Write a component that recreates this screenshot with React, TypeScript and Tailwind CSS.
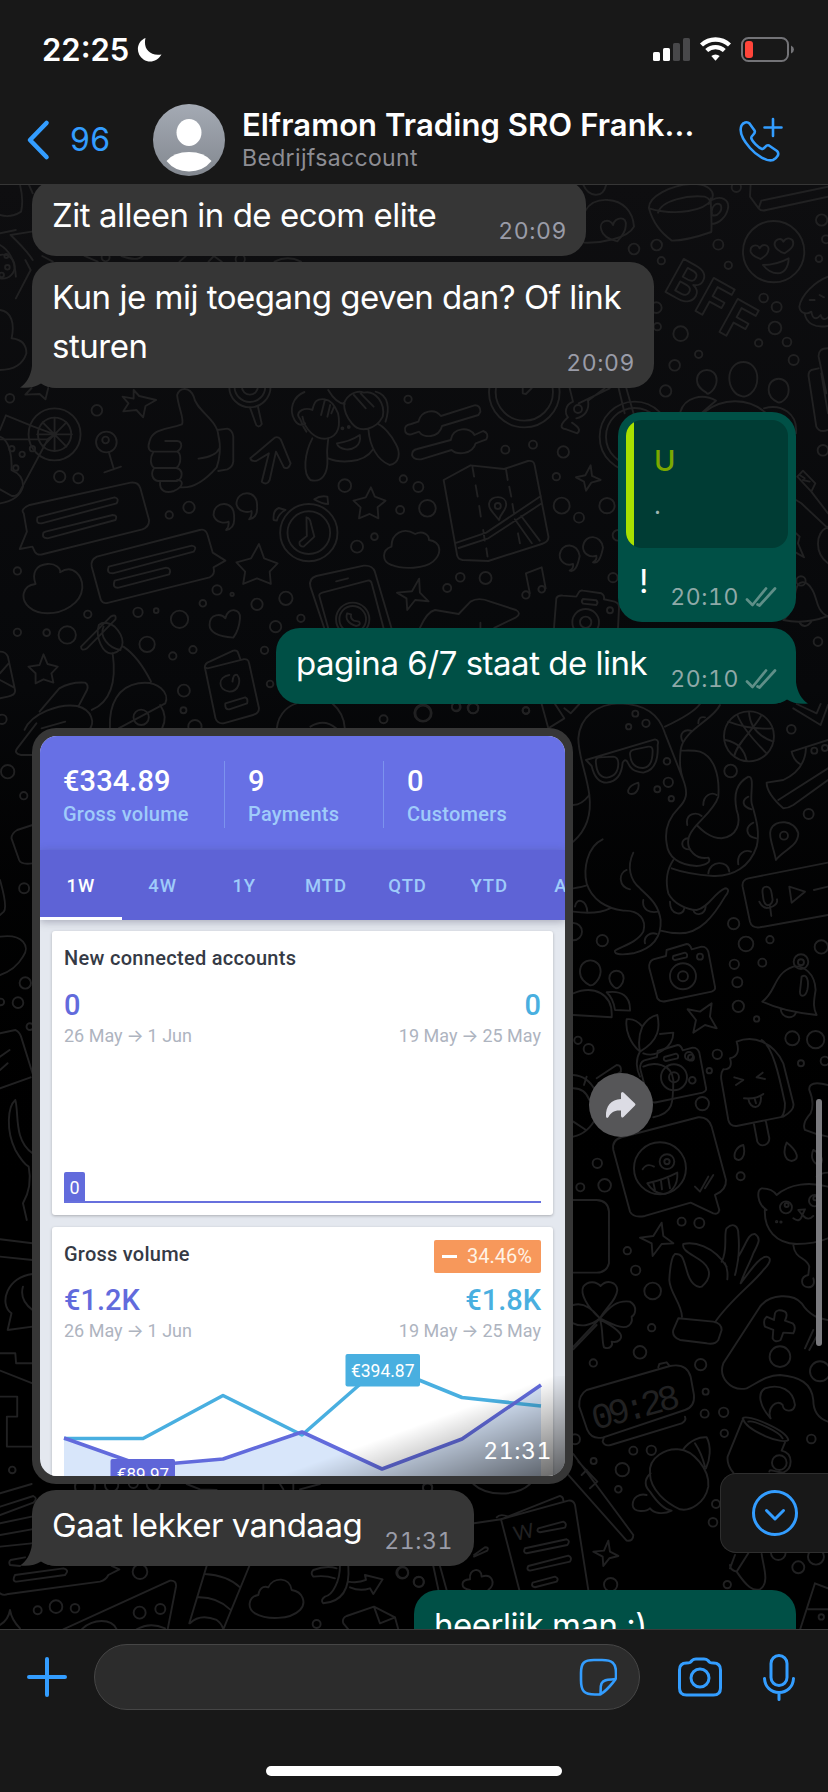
import clsx from 'clsx'
import React, { FC, ReactNode } from 'react'

/* ---------- Wallpaper ---------- */

type Dot = [number, number, number]

interface IDoodles {
  id: string
  transform: string
  // keeps the dots round where a group is scaled unevenly
  squeeze: number
  paths: string[]
  dots: Dot[]
}

const doodles: IDoodles[] = [
  {
    id: 'top-right',
    transform: 'translate(548 180) scale(0.3333)',
    squeeze: 1,
    paths: [
      'M112 92C125 70 150 58 180 60C225 62 255 95 258 140C240 175 160 190 108 188M105 12C120 50 165 60 175 12',
      'M160 150C150 125 185 110 195 135C200 110 240 105 233 140C232 160 215 175 208 184C190 180 165 170 160 150Z',
      'M303 85C300 50 370 15 430 12C480 10 505 35 490 60C470 90 390 110 303 85ZM330 98C340 60 420 45 470 50C485 55 490 65 482 72M303 85C315 130 340 160 372 182C410 182 450 170 490 156C492 140 490 110 488 55M492 60C520 45 545 60 540 85C535 110 515 130 492 132M492 100C488 80 505 65 518 75C525 90 510 112 492 105',
      'M608 12L606 50L632 85Q640 95 655 90L840 50M632 85L640 62L840 20',
      'M608 215C605 195 630 190 635 205C645 188 668 195 660 215C656 228 645 232 638 237C625 232 612 228 608 215ZM680 195C678 178 700 170 706 185C715 170 740 172 735 195C732 208 715 215 710 220C695 215 683 208 680 195ZM645 255Q685 255 722 235C722 265 705 280 690 280C670 280 655 268 645 255Z',
      'M840 290C800 305 760 345 754 380C756 400 775 405 790 395C795 425 810 415 818 405C822 420 832 420 840 412M770 400C775 430 800 445 840 438M785 360H800M815 345L828 352',
      'M447 600C447 560 506 560 506 600C506 625 480 650 475 638C462 630 447 620 447 600ZM544 595C544 530 628 530 628 595C628 640 590 655 580 648C560 645 544 620 544 595ZM662 630C662 585 722 585 722 630C722 655 700 670 690 667C675 660 662 650 662 630ZM397 696C410 650 465 640 504 662Q470 690 460 700M470 696C520 655 600 650 655 700M648 685C700 670 750 700 744 760',
      'M212 625L230 700M235 625L258 705M65 625L75 665C50 675 50 700 60 712C35 735 35 745 55 748L88 760C100 750 90 740 72 728M120 662L170 625M120 662C125 690 110 710 85 715M92 670L185 625',
      'M128 856L132 888L158 900L130 908L114 932L108 905L84 892L112 886Z',
      'M95 1128C90 1088 40 1085 35 1125C35 1145 55 1160 75 1152Q78 1165 65 1172Q85 1180 95 1128ZM165 1103C160 1063 110 1060 105 1100C105 1120 125 1135 145 1127Q148 1140 135 1147Q155 1155 165 1103Z',
      'M18 1344L25 1255Q30 1245 45 1247L85 1250L92 1238Q95 1230 105 1232L160 1240Q170 1245 168 1258L200 1265Q215 1270 213 1285L210 1344M105 1257L145 1261Q152 1268 145 1275L105 1271Q98 1264 105 1257Z',
      'M748 890L765 872L802 910L790 935M748 890L790 935L840 1000M755 885L770 895M765 900L785 905M744 960L760 970L840 1045M840 1040C800 1060 800 1120 840 1150M744 1060L755 1070L750 1090L768 1132L744 1118',
      'M706 1320C730 1300 735 1270 744 1230C750 1200 775 1200 790 1225C810 1250 800 1290 840 1310M706 1320Q770 1335 840 1308M755 1328Q770 1350 790 1325',
      'M840 505Q810 505 812 530L835 640M812 565L790 570Q780 575 782 590L805 740Q815 760 840 750M820 580L840 700',
    ],
    dots: [[677, 215, 92], [260, 770, 105], [260, 770, 86], [90, 687, 12], [113, 1327, 40], [113, 1327, 17], [186, 1291, 9], [759, 1203, 14], [258, 207, 16], [326, 195, 16], [340, 242, 11], [511, 194, 15], [541, 256, 11], [565, 22, 14], [821, 120, 17], [813, 236, 10], [834, 178, 12], [647, 354, 13], [686, 381, 15], [681, 444, 19], [717, 486, 13], [632, 489, 11], [737, 540, 15], [452, 523, 11], [380, 556, 16], [398, 461, 22], [353, 633, 17], [325, 383, 16], [328, 440, 11], [46, 816, 17], [25, 890, 11], [41, 977, 24], [93, 1013, 15], [177, 977, 23], [195, 1193, 14], [210, 1066, 16], [825, 811, 16], [810, 1385, 13]],
  },
  {
    id: 'upper-left',
    transform: 'translate(0 380) scale(0.3954 0.3333)',
    squeeze: 0.843,
    paths: [
      'M80 24L64 44L100 42L115 58L122 24M338 30L352 48L395 60L368 78L362 112L345 90L312 94L325 70L310 50L338 56Z',
      'M0 150L15 106L85 140L138 163L120 178H0M120 180L50 335Q42 350 30 348L0 328M138 113V213M94 163H182M108 127L168 200M168 127L108 200',
      'M275 216L288 268M264 277L306 260',
      'M460 133C468 120 450 80 448 45C455 20 480 20 490 50C495 90 550 120 552 165C560 200 555 240 548 262C520 300 490 325 458 322M460 133C420 150 385 145 378 185C372 205 378 215 388 215H448C462 205 462 185 448 183H418M388 215C378 235 380 255 390 264H446C460 250 458 220 448 215M390 264C380 280 385 300 400 303H448C462 295 465 270 446 264M405 303C402 335 420 340 440 333C465 320 465 300 448 300M502 236Q545 230 555 205M550 150L575 146Q588 150 590 170V245Q588 262 575 268L552 273',
      'M632 82L648 135Q655 145 662 132L652 78',
      'M633 235L690 178Q700 165 710 178L735 250Q730 270 718 262L698 215L682 300Q675 318 662 305L680 220L648 243Q635 245 633 235Z',
      'M770 36C740 50 730 90 745 120C755 140 768 135 772 130M765 110C770 150 800 180 825 176C860 170 860 130 855 100C845 70 835 60 822 58C800 55 795 65 790 90C770 80 750 95 755 110C765 125 760 130 775 155M822 58L812 105M835 75L828 110M845 80L838 100M870 70C880 40 905 30 920 38C950 30 975 70 968 110C950 150 910 160 890 130C875 110 870 90 870 70ZM895 45L925 85M912 40L945 80M950 35C985 45 985 90 975 125M790 175C770 220 765 280 785 300C815 310 830 280 828 235C825 205 830 190 830 176M932 150C935 200 955 240 985 255C1010 250 1015 220 1000 190C990 165 970 140 958 133M830 235C860 250 920 250 942 210M830 30Q850 70 872 72M852 190Q885 185 910 165C915 200 890 210 875 208Q855 205 852 190Z',
      'M1025 155Q1020 135 1040 132L1058 125C1065 90 1100 85 1115 108L1200 76Q1215 75 1215 95L1210 105L1118 138C1110 175 1070 175 1060 155L1040 163Q1030 165 1025 155ZM1042 225Q1042 210 1055 207L1140 180C1145 140 1190 140 1200 165L1222 153Q1238 160 1230 178L1203 190C1195 225 1155 225 1142 210L1065 238Q1045 240 1042 225Z',
      'M1322 24V40L1330 42L1345 24',
      'M60 400Q50 388 75 375L330 308Q350 305 355 325L377 420Q378 440 360 448L110 522Q95 528 88 515L82 500L50 507L68 455ZM100 410L290 352Q302 355 295 370L105 430Q90 432 95 412ZM115 455L285 405Q298 405 292 420L120 475Q105 475 110 458Z',
      'M232 560Q228 540 245 530L505 450Q520 445 525 465L538 518L570 542L540 562Q545 585 530 592L275 668Q260 673 255 660ZM275 560L485 497Q500 500 490 515L285 580Q268 580 275 560ZM290 602L420 563Q435 565 428 583L300 623Q283 625 290 602Z',
      'M592 410C595 360 540 360 540 405C545 430 570 430 578 425Q580 440 572 450Q595 445 592 410ZM650 378C653 328 598 328 598 373C603 398 628 398 636 393Q638 408 630 418Q653 413 650 378Z',
      'M775 412Q785 415 786 430L795 470L768 500Q755 500 758 485L776 468ZM795 358Q810 345 828 350L830 372Q815 372 795 358ZM692 420Q690 390 705 384L722 390Q705 400 700 422Z',
      'M938 322L948 350L975 362L955 382L957 415L935 402L908 415L912 382L894 362L925 352ZM655 492L668 535L702 550L682 575L685 612L650 595L615 612L620 575L598 547L635 535ZM110 823L120 852L146 860L130 880L135 908L110 898L90 910L90 880L72 860L100 855Z',
      'M990 555C965 545 965 510 990 500C990 460 1020 440 1050 462C1070 450 1085 465 1085 480C1115 485 1120 520 1095 545C1075 565 1020 570 990 555ZM90 612C80 580 90 555 120 552C140 550 155 565 152 577C185 550 210 590 208 625C205 670 160 700 120 700C80 700 55 670 60 640Q65 615 90 612Z',
      'M1122 300L1190 256L1275 267L1335 243Q1350 240 1352 255L1387 470Q1388 485 1370 492L1235 543L1170 540Q1158 538 1156 525ZM1155 488L1230 458L1368 348M1160 504L1235 475L1370 370M1302 418L1345 490M1318 408L1365 482M1262 420C1245 395 1235 385 1237 370C1240 345 1280 345 1280 372C1282 390 1265 400 1262 420ZM1195 262L1199 290M1203 316L1208 350M1212 378L1216 410M1222 450L1226 482M1230 505L1233 530M1280 270L1284 300M1288 320L1293 350M1296 372L1300 400M1310 460L1315 490',
      'M820 744L785 620Q780 595 800 588L920 557Q942 555 948 575L990 744M830 744L808 650Q805 642 815 638L930 602Q938 600 940 610L970 744M850 604L880 595M878 700Q870 725 900 738Q915 735 908 725L895 722Q885 715 888 703Z',
      'M1060 596L1062 638L1084 664L1050 660L1030 690L1028 655L1004 638L1042 634ZM1340 640L1330 580L1370 562L1380 625',
      'M1062 744Q1080 695 1100 690L1160 702L1190 665Q1210 650 1240 665L1305 690Q1320 700 1305 712L1250 744M1215 728V744',
      'M530 735C530 700 560 700 570 715C575 680 610 685 607 715C605 745 595 765 590 773C560 770 530 760 530 735Z',
      'M205 800L280 710Q295 700 292 718L220 805Q205 815 205 800ZM250 735C240 770 260 825 285 820C320 810 315 770 290 740Q265 720 250 735ZM262 740C250 770 275 805 305 810M285 820C292 880 290 960 232 990M312 800Q350 830 382 905M62 1050C80 1000 150 970 195 978C235 990 240 1030 225 1050M100 995L150 925Q180 905 215 908Q225 915 220 930L198 980M278 1045C275 970 300 920 350 910C400 900 430 940 418 970L300 1045M405 975Q425 1010 410 1045M105 1045L165 1025',
      'M518 862L545 1015Q550 1032 565 1030L640 1005Q655 1000 655 985L630 850Q628 835 615 838L525 865L518 862Q518 850 530 845L590 812Q600 810 602 818L608 838M570 970L620 952Q628 955 625 970L580 988Q568 990 570 970ZM580 885C550 890 550 930 580 935C605 935 610 900 600 885Q590 880 588 905',
      'M0 815Q15 815 20 830L38 930Q40 945 20 950L0 955M0 880L22 850M0 900L35 922M700 1045C705 995 735 975 750 970M840 970Q870 1000 872 1045M785 1040Q820 1015 850 1045',
    ],
    dots: [[138, 163, 78], [138, 163, 50], [269, 186, 31], [267, 180, 10], [632, 20, 62], [632, 20, 46], [632, 20, 24], [1326, 36, 106], [1326, 36, 86], [781, 458, 86], [781, 458, 64], [1259, 378, 9], [892, 718, 50], [892, 718, 40], [1330, 645, 11], [1370, 628, 10], [357, 1012, 23], [866, 145, 3], [882, 141, 3], [25, 55, 13], [245, 91, 16], [151, 290, 17], [198, 295, 15], [30, 206, 8], [56, 223, 8], [82, 206, 8], [40, 264, 8], [428, 405, 11], [478, 382, 17], [872, 317, 19], [1020, 297, 11], [1058, 321, 15], [1012, 390, 12], [1081, 385, 25], [903, 500, 18], [947, 470, 10], [1032, 58, 11], [1278, 209, 12], [1348, 194, 12], [44, 573, 11], [222, 703, 11], [44, 757, 11], [118, 758, 10], [170, 765, 26], [349, 697, 14], [395, 692, 7], [454, 718, 26], [549, 630, 14], [587, 643, 5], [513, 670, 10], [650, 673, 17], [723, 655, 20], [697, 740, 17], [761, 715, 11], [372, 793, 23], [437, 828, 11], [488, 809, 11], [465, 932, 18], [464, 991, 9], [669, 811, 11], [683, 912, 10], [1131, 624, 12], [1164, 592, 13], [1228, 594, 18], [970, 1018, 12], [1070, 1000, 23], [1153, 980, 12], [1197, 985, 15], [1330, 991, 10], [493, 1040, 20], [5, 1018, 14]],
  },
  {
    id: 'middle-right',
    transform: 'translate(400 680) scale(0.3333)',
    squeeze: 1,
    paths: [
      'M568 345C560 280 535 230 535 175C540 110 590 72 660 70C740 72 780 110 795 160L850 300C865 340 860 360 835 385C800 420 795 460 800 490C805 540 850 555 890 558C920 556 935 545 925 533C890 540 860 510 865 480C868 440 940 400 955 350C960 280 940 230 900 215C880 210 860 212 845 212M960 75C940 120 850 150 842 210C838 250 840 270 850 300M795 140Q880 100 900 72',
      'M1045 290C1010 310 1000 340 1010 390C1025 430 1010 470 965 475C930 475 905 450 890 435M1045 290C1065 290 1050 340 1055 370C1070 420 1080 460 1070 500C1050 560 1000 590 940 588C900 585 850 578 815 565M820 540C800 570 795 600 805 640C820 670 860 690 890 690C930 680 940 640 975 625C990 625 985 640 975 650C940 710 900 760 840 760Q810 760 782 752',
      'M608 478C560 500 550 570 560 610C575 660 620 685 670 692C720 690 740 720 730 755C710 790 660 800 645 812C640 825 670 825 700 820C760 805 785 770 782 720C775 670 745 650 720 625C690 600 680 560 700 518M568 345C575 400 560 450 520 485M520 375Q545 375 568 345M520 625Q550 620 558 617M520 695Q590 705 630 685',
      'M680 570C655 580 655 620 690 628M730 660C725 690 750 700 775 695M735 790C730 770 750 755 770 762M810 665C810 705 850 710 853 685M880 690C885 710 915 705 917 680M925 580C930 540 985 540 988 575M1015 553C1010 520 1035 508 1053 515M1060 428C1035 440 1035 470 1070 475M1045 350C1025 360 1025 380 1055 388M910 375C910 345 935 335 950 345M862 435C855 400 890 395 905 408M865 475C840 475 840 510 870 508M848 185C835 160 855 145 875 153M895 130Q895 108 915 112M525 680C530 650 560 660 562 695',
      'M558 240L765 178Q778 180 773 195C775 230 770 270 730 278C700 275 690 265 682 245Q675 235 668 248C665 285 650 305 620 308C590 308 580 280 575 258ZM588 250Q585 232 600 232L640 230Q655 232 655 250C655 275 645 290 620 293C600 292 590 275 588 250ZM690 222Q690 210 705 208L745 200Q758 198 758 212C758 240 750 262 730 264C705 265 692 250 690 222ZM685 330Q690 315 715 308C720 330 705 342 695 342Q682 342 685 330Z',
      'M1012 105C1030 150 1080 200 1100 220M1085 105C1060 150 1010 190 1003 228M976 180Q1030 190 1040 243M985 125Q1050 150 1118 145M1047 95Q1050 160 1120 185',
      'M1180 85L1262 135L1284 75M1190 72L1250 100L1262 72M1175 215L1284 180M1175 215Q1180 240 1200 252M1218 205Q1215 270 1150 300L1100 308Q1100 340 1150 385Q1165 385 1180 375L1284 300M1135 360L1284 265',
      'M1128 540C1120 500 1105 470 1112 450C1125 415 1185 420 1195 460C1195 500 1150 510 1128 540Z',
      'M1284 548L1045 595Q1025 600 1028 620L1050 725Q1055 745 1080 742L1284 705M1168 620L1215 635L1175 668ZM1242 630L1284 620M1110 678L1114 708M1078 665Q1090 690 1110 682Q1135 675 1131 658M1088 640Q1085 620 1100 620Q1113 622 1115 640L1118 660Q1115 675 1103 676Q1092 672 1090 655Z',
      'M540 875C540 830 602 830 602 875C600 900 580 918 570 916C555 910 540 895 540 875ZM628 895C628 865 671 865 671 895C670 915 655 925 648 925C640 920 630 912 628 895ZM520 940C580 915 640 940 635 1012L520 1005M620 937C665 930 692 950 690 992L645 990Q640 955 620 937Z',
      'M863 988L900 995L935 970L930 1010L950 1045L915 1035L880 1058L888 1020Z',
      'M1180 860C1210 855 1245 880 1247 930C1240 970 1240 985 1250 1005C1200 1000 1140 990 1087 965C1130 935 1120 880 1180 860ZM1142 987C1145 1015 1180 1020 1188 998M1205 890C1220 880 1228 900 1222 930C1215 955 1200 950 1200 935Z',
      'M720 1115C690 1090 675 1050 680 1018C700 1015 715 1025 727 1040C740 1020 755 1008 772 1005C780 1040 780 1080 720 1115ZM727 1040Q712 1075 720 1115M780 1062L820 1058C820 1100 770 1135 730 1120M720 1115C705 1140 710 1170 720 1190M730 1160C760 1145 815 1150 820 1200C820 1270 820 1300 760 1312',
      'M520 1185C580 1190 610 1260 590 1310C570 1350 545 1365 520 1370M520 1225Q555 1225 568 1260M590 1195L650 1155Q665 1155 663 1175L625 1200M520 1325L558 1350M560 1190L552 1215',
      'M1010 1085C1060 1065 1120 1085 1150 1150L1180 1270Q1185 1290 1150 1310L1010 1338Q990 1340 985 1320L965 1205Q960 1180 970 1168C995 1170 995 1150 990 1135C1015 1130 1018 1110 1010 1085ZM1085 1080C1120 1100 1140 1200 1155 1270Q1155 1300 1145 1310M1062 1332L1072 1385Q1080 1400 1095 1395Q1108 1390 1108 1375L1098 1325M1003 1192L1030 1200L1008 1215M1088 1178L1070 1192L1095 1197M1032 1255Q1070 1258 1090 1242M1045 1256C1050 1290 1085 1290 1083 1252M1064 1256L1068 1270',
      'M935 1340L978 1500Q980 1530 945 1545L958 1590Q955 1605 940 1600L872 1568L735 1608Q700 1615 690 1595L640 1410Q635 1380 665 1372L895 1312Q925 1310 935 1340ZM728 1468Q740 1448 762 1460M742 1510Q790 1500 832 1478C835 1520 810 1540 790 1542Q760 1540 742 1510ZM760 1508L765 1530M783 1502L786 1528M805 1496L810 1525M885 1520L900 1535L925 1490M915 1525L940 1485',
      'M1284 1215Q1225 1200 1228 1230Q1245 1270 1232 1300Q1205 1330 1215 1350Q1250 1365 1284 1370M1030 1395C1010 1400 1000 1420 1005 1435C1020 1450 1040 1430 1030 1395ZM1160 1388C1150 1410 1150 1440 1175 1443C1200 1440 1195 1415 1160 1388ZM1240 1410C1230 1430 1240 1455 1260 1453C1275 1440 1260 1420 1240 1410Z',
      'M425 72L445 145L493 115L465 72M493 85L512 100L538 72',
    ],
    dots: [[1047, 169, 75], [1243, 212, 9], [1275, 204, 9], [1152, 467, 12], [1203, 845, 22], [1203, 847, 9], [780, 1465, 78], [801, 1445, 22], [801, 1445, 8], [520, 755, 26], [69, 99, 26], [169, 81, 13], [219, 84, 16], [378, 92, 10], [706, 101, 9], [738, 130, 11], [686, 140, 8], [801, 244, 10], [805, 307, 14], [772, 328, 9], [814, 356, 8], [992, 273, 19], [1174, 148, 13], [1226, 402, 15], [1001, 731, 17], [607, 782, 17], [1038, 792, 22], [1110, 779, 11], [1264, 801, 20], [1003, 853, 14], [1087, 848, 12], [1012, 907, 15], [1015, 979, 17], [1070, 1017, 8], [1177, 1075, 21], [1247, 1079, 26], [1203, 1150, 9], [1275, 1143, 13], [867, 1128, 12], [952, 1123, 14], [928, 1172, 8], [877, 1201, 10], [907, 1271, 20], [534, 1081, 11], [566, 1107, 15], [592, 1450, 14], [1022, 1489, 12]],
  },
  {
    id: 'bottom-right',
    transform: 'translate(400 1160) scale(0.3333)',
    squeeze: 1,
    paths: [
      'M520 120H590Q625 122 627 155V310Q620 338 590 338H520M785 188L790 228L820 250L785 252L758 288L755 250L720 233L760 228Z',
      'M846 470C845 430 810 400 808 360C810 320 815 290 825 282C850 280 850 300 860 330C870 370 890 385 905 380C940 350 930 320 900 300C870 280 845 270 850 252C880 245 940 255 980 320M965 305C985 270 970 220 980 205C1000 185 1015 200 1015 220C1020 270 1015 310 1005 345M975 310Q985 330 982 358M1015 290C1040 250 1045 220 1065 222C1085 235 1075 250 1060 280C1050 310 1035 330 1022 370C1060 320 1080 290 1100 290C1120 295 1105 315 1090 330C1060 370 990 420 945 487M835 475L940 485Q965 490 965 510L955 540Q945 555 920 550L840 540Q815 530 820 510Z',
      'M600 475C560 440 540 400 550 380C565 360 590 365 602 378C620 358 650 365 652 390C650 420 620 440 600 475ZM600 475C630 440 650 420 690 425C715 440 705 465 695 470C700 495 680 505 660 500C640 495 620 485 600 475ZM600 478C610 510 605 545 612 562C630 570 640 555 635 545C655 550 670 535 660 520C645 500 620 490 600 478ZM600 475C580 450 550 425 520 435M600 475C570 500 540 500 520 490M600 475L520 560M590 495L520 568',
      'M1100 150C1070 130 1070 90 1085 85C1105 85 1120 90 1130 105C1170 70 1230 65 1284 80M1095 145C1090 210 1130 250 1190 252C1230 252 1260 245 1284 235M1180 255C1185 300 1220 290 1228 320L1225 345C1200 350 1200 380 1225 382C1240 382 1245 370 1240 355M1250 50C1262 40 1275 38 1284 38M1195 150L1215 148L1207 165ZM1180 175Q1200 190 1207 165Q1225 185 1240 168',
      'M970 610L1080 440C1110 400 1180 400 1205 430C1230 470 1260 475 1284 480M970 610C955 650 990 695 1040 685C1070 670 1100 645 1140 645C1200 650 1235 670 1240 720Q1240 770 1284 785M1125 460Q1130 445 1155 455Q1165 462 1155 482L1178 490Q1190 500 1180 520L1150 518L1142 540Q1125 550 1118 535L1120 510L1095 500Q1088 480 1100 470L1122 480ZM1240 510L1215 565M1258 515L1228 570',
      'M538 740Q535 705 560 690L810 618Q860 608 872 650L882 705Q885 740 855 750L610 832Q575 840 562 810ZM775 622L778 612L800 607L808 617M612 832L608 845Q615 860 632 855L845 790Q860 782 855 770',
      'M1112 775C1080 740 1070 700 1095 685C1140 670 1180 690 1185 735C1180 760 1150 755 1148 735C1130 715 1100 745 1112 775ZM1028 775C1040 760 1160 810 1165 840C1150 855 1040 815 1028 775ZM1045 785C1060 780 1140 815 1148 835M1028 780L983 890Q980 915 1000 938M1155 848L1145 872C1180 880 1180 925 1150 938C1120 935 1110 925 1108 935',
      'M750 940C745 890 800 865 835 868C880 870 930 930 925 980C915 1030 870 1055 840 1048C800 1030 750 990 750 940ZM850 868C870 840 900 830 920 832C935 860 930 900 918 925M885 850Q905 880 915 920M752 940C730 960 735 980 750 995C780 1040 800 1050 815 1052C790 1065 760 1060 750 1045C740 1055 700 1060 698 1035C698 1010 720 1000 740 1005',
      'M520 882L700 1125Q700 1145 680 1142L505 945M535 905L592 965L570 985M560 930L545 945',
      'M303 1078L480 1008Q490 1010 490 1022M303 1078L358 1290M303 1078L505 1022Q520 1020 525 1035L565 1290M222 1090L303 1078M290 1072Q300 1060 325 1070M415 1105L490 1085Q502 1090 495 1103L420 1117Q408 1115 415 1105ZM375 1165L500 1138Q512 1142 502 1155L380 1180Q368 1178 375 1165ZM385 1218L505 1187Q518 1192 510 1205L390 1232Q378 1230 385 1218ZM398 1268L465 1250Q478 1255 470 1265L405 1282Q392 1280 398 1268Z',
      'M222 1185L255 1162Q268 1162 262 1172L222 1190M210 1290C180 1285 180 1260 210 1258C205 1225 245 1220 245 1250C275 1240 290 1270 265 1290',
      'M625 1142L630 1175L655 1188L628 1195L610 1218L608 1190L580 1175L612 1172ZM220 972C260 1010 350 1010 390 972',
      'M990 1225L1005 1185M1045 1180L1010 1235Q990 1230 990 1215M1010 1235C1040 1280 1060 1295 1080 1288C1110 1270 1090 1220 1085 1182M1245 1270L1200 1410M1245 1270L1284 1285M1225 1348H1284',
    ],
    dots: [[1158, 142, 18], [1244, 122, 17], [1160, 135, 6], [1246, 115, 6], [1130, 185, 2], [1143, 186, 2], [1140, 590, 31], [1260, 634, 30], [1138, 908, 22], [1264, 1371, 8], [541, 82, 12], [614, 76, 19], [845, 185, 12], [898, 189, 15], [682, 272, 11], [707, 331, 14], [758, 393, 25], [755, 503, 11], [720, 577, 19], [580, 609, 11], [902, 614, 17], [917, 695, 9], [914, 761, 12], [971, 757, 14], [973, 820, 11], [700, 872, 12], [754, 871, 14], [667, 929, 20], [655, 988, 10], [581, 903, 9], [1234, 837, 13], [948, 1032, 12], [939, 1087, 13], [632, 1274, 20], [982, 1274, 11], [1195, 1222, 18], [1248, 1190, 24], [1135, 1178, 22], [57, 1266, 15], [8, 1238, 16], [83, 985, 14], [525, 838, 15]],
  },
  {
    id: 'bottom-left',
    transform: 'translate(0 1480) scale(0.3333)',
    squeeze: 1,
    paths: [
      'M0 40L95 12M0 80L100 48Q115 55 100 68L0 105M0 130L95 110M0 165L95 148M0 200L95 190M75 232L32 240Q25 245 30 255L60 258M45 285L190 265Q210 270 195 285L50 305Q35 305 45 285ZM0 340Q10 348 25 342L300 305Q318 300 325 285L358 268L335 258',
      'M0 435Q25 420 30 390Q35 420 60 445M190 448L510 302Q530 300 528 320L503 448M245 448C280 415 335 415 350 448M410 448Q450 425 495 445',
      'M620 258L568 430M748 258L670 448M615 282Q680 285 720 322M592 352Q650 350 690 388M570 430Q600 400 650 420Q665 430 670 448',
      'M765 400C740 385 745 350 775 345C780 315 800 320 805 322C820 290 870 290 875 330C910 335 920 370 900 390C870 420 800 420 765 400Z',
      'M1010 265Q980 255 940 270Q930 280 940 290Q975 285 1005 295M1020 258C1020 300 1000 345 975 350Q960 360 970 370C1030 365 1050 320 1045 258M1045 305Q1075 310 1098 300L1095 285L1148 298L1120 342L1110 325Q1080 335 1050 322',
      'M1045 448L1030 430Q1025 415 1040 408L1122 380L1185 412L1195 448M1122 380L1140 430L1185 412M1320 258L1340 330M1300 258L1315 328M560 12L600 28L650 30M790 12V28M840 12L850 28M880 12V28M900 28L960 12',
    ],
    dots: [[113, 391, 12], [168, 380, 19], [225, 385, 13], [420, 275, 22], [419, 398, 18], [481, 387, 15], [1207, 278, 18], [1256, 305, 15], [950, 432, 12], [1283, 22, 14], [335, 15, 20], [400, 10, 14], [460, 12, 20], [255, 20, 30]],
  },
  {
    id: 'left-edge',
    transform: 'translate(0 720) scale(0.3827 0.3333)',
    squeeze: 0.871,
    paths: [
      'M85 105L55 105Q35 100 45 85L95 10M85 315L45 330Q30 340 30 355L50 420Q55 435 85 430M0 480Q20 560 10 575L0 585M0 650C60 640 80 680 60 710Q40 750 0 765M0 940L40 930Q50 935 55 950L85 1060M0 1105L80 1072M0 1010L25 990M0 1050L20 1030',
      'M40 1140C20 1160 15 1230 40 1290Q60 1330 75 1340Q85 1400 60 1450L70 1500M40 1140C50 1180 35 1260 85 1300',
      'M0 1558L85 1570M0 1610L85 1620M85 1662C20 1670 -5 1750 30 1780L20 1830L85 1820M60 1700Q50 1740 85 1770M0 1900H40L42 1930H85M0 1952L85 1990M0 2030H45V2090H18V2180H85',
      'M0 -850C25 -840 32 -790 30 -750Q62 -735 60 -700Q50 -660 0 -650',
    ],
    dots: [[20, 155, 20], [62, 227, 11], [63, 505, 15], [66, 789, 17], [47, 848, 16], [2, 846, 10], [78, 920, 10], [32, 2250, 10]],
  },
  {
    id: 'top-left',
    transform: 'translate(0 180) scale(0.528 0.3333)',
    squeeze: 0.631,
    paths: [
      'M0 105Q20 115 40 95Q45 60 38 15M0 160L30 150M20 165L60 155M20 165Q50 210 62 240M0 195Q28 220 30 290M48 240L58 270L30 355M55 15L62 40',
      'M0 390C22 395 28 430 22 475Q50 480 50 520Q40 570 0 570',
      'M80 228L100 245M160 228L185 245M230 228Q260 245 270 228M340 245L352 228M395 245L405 228L420 245M520 245Q545 225 570 245',
    ],
    dots: [[5, 260, 36], [14, 262, 7], [3, 285, 7], [12, 228, 6], [200, 232, 12], [455, 238, 14]],
  },
]

const CameraDoodle: FC<{ transform: string }> = ({ transform }) => (
  <g transform={transform}>
    <path d="M748 865Q745 845 760 838L798 828L800 810L860 792Q870 792 875 808L905 800Q920 800 925 815L945 920Q948 930 935 935L800 963Q780 968 772 955ZM820 828L855 818Q865 822 860 832L825 840Q815 838 820 828Z" vectorEffect="non-scaling-stroke" />
    <circle cx="849" cy="889" r="39" vectorEffect="non-scaling-stroke" />
    <circle cx="849" cy="889" r="15" vectorEffect="non-scaling-stroke" />
    <circle cx="900" cy="830" r="9" vectorEffect="non-scaling-stroke" />
  </g>
)

const Wallpaper = () => (
  <svg className="absolute inset-0 h-full w-full" viewBox="0 185 828 1444" fill="none" stroke="#212122" strokeWidth="1.9" strokeLinecap="round" strokeLinejoin="round" aria-hidden="true">
    {doodles.map(({ id, transform, squeeze, paths, dots }) => (
      <g key={id} transform={transform}>
        {paths.map((d) => <path key={d} d={d} vectorEffect="non-scaling-stroke" />)}
        {dots.map(([x, y, r]) => <ellipse key={`${x}-${y}-${r}`} cx={x} cy={y} rx={r * squeeze} ry={r} vectorEffect="non-scaling-stroke" />)}
      </g>
    ))}
    <CameraDoodle transform="translate(400 680) scale(0.3333)" />
    <CameraDoodle transform="translate(391 781) scale(0.3333)" />
    <g className="font-['Lato']" fontSize="52" fontWeight="900">
      <text transform="translate(662 290) rotate(29)">B</text>
      <text transform="translate(692 309) rotate(29)">F</text>
      <text transform="translate(716 330) rotate(29)">F</text>
    </g>
    <text className="font-['Liberation_Mono']" transform="translate(595 1430) rotate(-15)" fontSize="36" fill="#212122" stroke="none" textLength="90">09:28</text>
    <text className="font-['Lato']" transform="translate(515 1541) rotate(-12)" fontSize="20" fill="#212122" stroke="none">W</text>
  </svg>
)

/* ---------- Header ---------- */

const StatusIcons = () => (
  <svg width="142" height="28" viewBox="0 0 142 28" fill="none">
    <rect x="0" y="17" width="7" height="9" rx="1.6" fill="#fff" />
    <rect x="10" y="13" width="7" height="13" rx="1.6" fill="#fff" />
    <rect x="20" y="8" width="7" height="18" rx="1.6" fill="#48484a" />
    <rect x="30" y="3" width="7" height="23" rx="1.6" fill="#48484a" />
    <path d="M48.5 10A20.5 20.5 0 0 1 76.5 10" stroke="#fff" strokeWidth="4.4" />
    <path d="M53.7 15.6A12.8 12.8 0 0 1 71.3 15.6" stroke="#fff" strokeWidth="4.2" />
    <path d="M58.3 21A6.4 6.4 0 0 1 66.7 21L62.5 25.8Z" fill="#fff" />
    <rect x="89" y="3" width="46" height="23" rx="6.5" stroke="#737377" strokeWidth="2" />
    <rect x="92" y="6" width="8" height="17" rx="3" fill="#ff453a" />
    <path d="M138 10.5Q141 12 141 14.5T138 18.5Z" fill="#737377" />
  </svg>
)

const Header = () => (
  <header className="relative z-10 flex h-[185px] shrink-0 flex-col border-b border-[#363636] bg-[#181818]">
    <div className="flex h-[98px] items-start justify-between pt-[30px] pr-[33px] pl-[42px]">
      <div className="flex items-center">
        <span className="text-[31px] leading-[40px] font-semibold text-white">22:25</span>
        <svg className="ml-2" width="26" height="26" viewBox="0 0 26 26" fill="#fff">
          <path d="M8.5 1C6 11 12 19.5 24.5 17.5C20.5 24.5 12.5 26.5 6.5 22.5C-2 16.5-.5 4.5 8.5 1Z" />
        </svg>
      </div>
      <div className="pt-[5px]"><StatusIcons /></div>
    </div>
    <div className="flex h-[84px] items-center pr-[44px] pl-[26px]">
      <svg width="24" height="42" viewBox="0 0 24 42" fill="none" stroke="#339dff" strokeWidth="4.6" strokeLinecap="round" strokeLinejoin="round">
        <path d="M20.5 4L4 21L20.5 38" />
      </svg>
      <span className="ml-5 w-[83px] text-[32px] leading-[40px] tracking-[0.4px] text-[#339dff]">96</span>
      <svg className="shrink-0" width="72" height="72" viewBox="0 0 72 72">
        <defs>
          <linearGradient id="avatar" x1="0" y1="0" x2="0" y2="1">
            <stop offset="0" stopColor="#a4aab4" />
            <stop offset="1" stopColor="#838890" />
          </linearGradient>
        </defs>
        <circle cx="36" cy="36" r="36" fill="url(#avatar)" />
        <ellipse cx="36" cy="28.5" rx="12.5" ry="13.5" fill="#fff" />
        <path d="M13.5 57Q21 48 36 48T58.500 57Q50 67.500 36 67.500T13.500 57Z" fill="#fff" />
      </svg>
      <div className="ml-[17px] w-[470px]">
        <h1 className="text-[31px] leading-[36px] font-semibold tracking-[0.08px] whitespace-nowrap text-white">Elframon Trading SRO Frank...</h1>
        <p className="text-[23px] leading-[30px] tracking-[0.35px] text-[#8d8d93]">Bedrijfsaccount</p>
      </div>
      <svg className="ml-auto" width="46" height="46" viewBox="0 0 46 46" fill="none" stroke="#339dff" strokeWidth="2.6" strokeLinecap="round" strokeLinejoin="round">
        <path d="M35 2V19M26.5 10.5H43.5" />
        <path d="M3.500 8.500C5 5.500 9 4 11.500 6.500L16.500 13.500C18.500 17 13 18 13.200 21C14 24.500 20.500 31 24 32C27 32.200 27.500 27 31 28.500L39 34C42 37 39 41 35 43C29 45 18.500 38.500 12 31C4 22 1 14.500 3.500 8.500Z" />
      </svg>
    </div>
  </header>
)

/* ---------- Messages ---------- */

interface IBubble {
  out?: boolean
  tail?: boolean
  className?: string
  children: ReactNode
}

const Bubble: FC<IBubble> = ({ out, tail, className, children }) => (
  <div className={clsx('relative rounded-[24px]', out ? 'self-end bg-[#005046]' : 'self-start bg-[#363636]', className)}>
    {tail && (
      <svg className={clsx('absolute bottom-0', out ? '-right-[12px] -scale-x-100' : '-left-[12px]')} width="40" height="28" viewBox="0 0 40 28" fill={out ? '#005046' : '#363636'}>
        <path d="M12 0V6C11 16 6 24 0 27.500C8 28.500 16 27 21 23.500Q26 27.500 38 28V0Z" />
      </svg>
    )}
    {children}
  </div>
)

const Ticks = () => (
  <svg width="33" height="22" viewBox="0 0 33 22" fill="none" stroke="#5f8f88" strokeWidth="2.7" strokeLinecap="round" strokeLinejoin="round">
    <path d="M2 13.5L7.5 19L21 2.5M12.5 18.5L14.5 19.500L30 2.500" />
  </svg>
)

interface IMeta {
  time: string
  read?: boolean
}

const Meta: FC<IMeta> = ({ time, read }) => (
  <span className={clsx('relative flex shrink-0 items-center gap-[6px] text-[23px] leading-[28px] tracking-[0.6px] tabular-nums', read ? 'text-[#8fa9a8]' : 'text-[#9a9ca8]')}>
    {time}
    {read && <Ticks />}
  </span>
)

/* ---------- Dashboard picture ---------- */

const stats = [
  { value: '€334.89', label: 'Gross volume', box: 'w-[184px] pl-[23px]' },
  { value: '9', label: 'Payments', box: 'w-[159px] border-l border-[#7c93ee] pl-[23px]' },
  { value: '0', label: 'Customers', box: 'w-[182px] border-l border-[#7c93ee] pl-[23px]' },
]

const ranges = ['1W', '4W', '1Y', 'MTD', 'QTD', 'YTD']

const Period: FC<{ from: string; to: string }> = ({ from, to }) => (
  <p className="flex text-[18px] leading-[28px] text-[#aeb4bf]">
    {from}
    <span className="flex w-[25px] justify-center font-['Inter']">→</span>
    {to}
  </p>
)

const Compare: FC<{ now: string; before: string }> = ({ now, before }) => (
  <div className="flex justify-between">
    <div>
      <p className="text-[29px] leading-[34px] font-medium text-[#626bdc]">{now}</p>
      <Period from="26 May" to="1 Jun" />
    </div>
    <div>
      <p className="text-right text-[29px] leading-[34px] font-medium text-[#49afe0]">{before}</p>
      <Period from="19 May" to="25 May" />
    </div>
  </div>
)

const Dashboard = () => (
  <div className="relative h-[740px] w-[525px] overflow-hidden rounded-[17px] bg-[#e4e8ef] font-['Roboto',sans-serif]">
    <div className="flex h-[114px] bg-[#6770e5] pt-[25px]">
      {stats.map(({ value, label, box }) => (
        <div key={label} className={clsx('h-[67px]', box)}>
          <p className="pt-[3px] text-[29px] leading-[34px] font-medium tracking-[0.1px] text-white">{value}</p>
          <p className="pt-px text-[20px] leading-[30px] font-medium tracking-[0.25px] text-[#9fcbfa]">{label}</p>
        </div>
      ))}
    </div>
    <div className="flex h-[70px] overflow-hidden bg-[#5e63d6] text-[18.5px] leading-[72px] font-medium tracking-[0.9px] text-[#9fcbfa] shadow-[0_2px_8px_rgba(60,60,90,0.35)]">
      {ranges.map((range) => (
        <span key={range} className={clsx('h-[70px] w-[81.7px] shrink-0 text-center', range === '1W' && 'border-b-[3px] border-white text-white')}>{range}</span>
      ))}
      <span className="ml-[24px] shrink-0">A</span>
    </div>
    <div className="mx-3 mt-[11px] flex h-[284px] flex-col rounded-[3px] bg-white px-3 pt-[13px] shadow-[0_1px_3px_rgba(0,0,0,0.25)]">
      <h2 className="mb-[16px] text-[20px] leading-[28px] font-medium tracking-[0.3px] text-[#353a45]">New connected accounts</h2>
      <Compare now="0" before="0" />
      <div className="mt-auto mb-3 flex border-b-2 border-[#6770dd]">
        <span className="h-[29px] w-[21px] rounded-t-[2px] bg-[#626bdc] text-center text-[18px] leading-[31px] text-white">0</span>
      </div>
    </div>
    <div className="mx-3 mt-3 flex h-[260px] flex-col rounded-[3px] bg-white px-3 pt-[13px] shadow-[0_1px_3px_rgba(0,0,0,0.25)]">
      <div className="flex h-[43px] items-start justify-between">
        <h2 className="text-[20px] leading-[28px] font-medium tracking-[0.25px] text-[#353a45]">Gross volume</h2>
        <span className="flex h-[33px] w-[107px] items-center justify-between rounded-[2px] bg-[#f7985b] pr-[9px] pl-[8px] text-[20px] text-[#fff3e6]">
          <i className="h-[3px] w-[15px] bg-white" />
          34.46%
        </span>
      </div>
      <Compare now="€1.2K" before="€1.8K" />
      <svg className="mt-px shrink-0 overflow-visible" width="477" height="131" viewBox="64 1345 477 131" fill="none" strokeWidth="3.6" strokeLinejoin="round">
        <path d="M64 1437L143 1465L223 1458L302 1431L382 1468L462 1438L541 1384V1480H64Z" fill="#d8e6fa" />
        <path d="M64 1437.5H143L223 1394.5L302 1434L382 1364L462 1396.5L541 1405" stroke="#49afe0" />
        <path d="M64 1437L143 1465L223 1458L302 1431L382 1468L462 1438L541 1384" stroke="#626bdc" />
        <rect x="345.500" y="1353" width="74.500" height="32.500" rx="2" fill="#49afe0" />
        <text x="382.700" y="1375.500" fontSize="17.500" fill="#fff" textAnchor="middle">€394.87</text>
        <rect x="110.500" y="1458" width="64.500" height="33" rx="2" fill="#5f66d8" />
        <text x="143" y="1478.500" fontSize="17" fill="#fff" textAnchor="middle">€89.97</text>
      </svg>
    </div>
    <div className="absolute right-0 bottom-0 h-[100px] w-[300px] bg-[linear-gradient(160deg,rgba(0,0,0,0)_50%,rgba(0,0,0,0.3)_75%,rgba(0,0,0,0.6)_100%)]" />
    <span className="absolute right-[13px] bottom-[11px] font-['Inter',sans-serif] text-[23px] leading-[28px] tracking-[0.6px] text-white tabular-nums">21:31</span>
  </div>
)

/* ---------- Chat ---------- */

const Chat = () => (
  <main className="relative min-h-0 flex-1 overflow-hidden bg-linear-to-b from-[#0e0e10] via-[#07080a] via-35% to-black to-75%">
    <Wallpaper />
    <div className="relative -mt-[5px] flex flex-col px-8 text-[33px] leading-[49px] tracking-[-0.48px] text-white">
      <Bubble className="flex h-[76px] w-[554px] items-end justify-between pr-[19px] pb-[11px] pl-5">
        <span className="mb-[5px]">Zit alleen in de ecom elite</span>
        <Meta time="20:09" />
      </Bubble>
      <Bubble tail className="mt-1.5 flex h-[126px] w-[622px] items-end justify-between pr-[19px] pb-[11px] pl-5">
        <span className="mb-[6px] whitespace-nowrap">Kun je mij toegang geven dan? Of link<br />sturen</span>
        <span className="-ml-20"><Meta time="20:09" /></span>
      </Bubble>
      <Bubble out className="mt-6 h-[210px] w-[178px] p-2">
        <div className="flex h-32 overflow-hidden rounded-[16px] bg-[#003c34]">
          <div className="w-2 bg-[#a8e000]" />
          <div className="pt-[15px] pl-5">
            <p className="text-[29px] leading-[52px] font-medium text-[#7ba800]">U</p>
            <p className="text-[24px] leading-[38px] text-[#a0b5b2]">.</p>
          </div>
        </div>
        <div className="flex h-[66px] items-end justify-between pr-[10px] pb-[3px] pl-[13px]">
          <span className="mb-[5px]">!</span>
          <Meta time="20:10" read />
        </div>
      </Bubble>
      <Bubble out tail className="mt-1.5 flex h-[76px] w-[520px] items-end justify-between pr-[18px] pb-[11px] pl-5">
        <span className="mb-[5px]">pagina 6/7 staat de link</span>
        <Meta time="20:10" read />
      </Bubble>
      <div className="mt-6 flex items-center tracking-normal">
        <Bubble className="p-2">
          <Dashboard />
        </Bubble>
        <button className="mt-[-2px] ml-4 grid h-16 w-16 place-items-center rounded-full bg-[#565658]" aria-label="Forward">
          <svg width="32" height="28" viewBox="0 0 32 28" fill="#dcdce4">
            <path d="M16 2.5Q16.5 0 18.5 1.5L30 12.5Q31 13.5 30 14.5L18.5 26Q16.5 27.5 16 25V19.5C9 19 6 21.5 3.5 26Q1.5 28 1 25.5C.5 15 6 8.5 16 8Z" />
          </svg>
        </button>
      </div>
      <Bubble tail className="mt-1.5 flex h-[76px] w-[442px] items-end justify-between pr-[21px] pb-[11px] pl-5">
        <span className="mb-[5px]">Gaat lekker vandaag</span>
        <Meta time="21:31" />
      </Bubble>
      <Bubble out className="mt-6 h-[76px] w-[382px] pt-[11px] pl-5">heerlijk man :)</Bubble>
    </div>
    <div className="absolute top-[914px] right-[6px] h-[247px] w-[6px] rounded-full bg-[#818185]/95" />
    <button className="absolute right-0 bottom-[76px] grid h-[80px] w-[108px] place-items-center rounded-l-[16px] border border-r-0 border-[#2e2e2e] bg-[#181818]" aria-label="Scroll down">
      <svg width="48" height="48" viewBox="0 0 48 48" fill="none" stroke="#339dff" strokeWidth="3" strokeLinecap="round" strokeLinejoin="round">
        <circle cx="24" cy="24" r="21.5" />
        <path d="M15.5 21.5L24 30L32.5 21.5" />
      </svg>
    </button>
  </main>
)

const Composer = () => (
  <footer className="relative z-10 flex h-[163px] shrink-0 flex-col justify-between border-t border-[#3a3a3a] bg-[#181818] pt-[14px] pb-4 text-[#339dff]">
    <div className="flex items-center pl-[27px]">
      <svg width="40" height="40" viewBox="0 0 40 40" stroke="currentColor" strokeWidth="4" strokeLinecap="round">
        <path d="M20 2V38M2 20H38" />
      </svg>
      <div className="ml-[27px] flex h-[66px] w-[546px] items-center justify-end rounded-full border border-[#464646] bg-[#2c2c2c] pr-[22px]">
        <svg width="38" height="38" viewBox="0 0 38 38" fill="none" stroke="currentColor" strokeWidth="2.6" strokeLinejoin="round">
          <path d="M20 36.5H16C5 36.5 2 33 2 22V15C2 5 5 2 15 2H23C33 2 37 5 37 15V20C36 23 27 33 22 36Q21 36.5 20 36.5Z" />
          <path d="M21.5 36.3C22 33 21 29 22.5 25.5C25 20.5 31 22 37 21" />
        </svg>
      </div>
      <svg className="ml-[37px]" width="46" height="40" viewBox="0 0 46 40" fill="none" stroke="currentColor" strokeWidth="3" strokeLinejoin="round">
        <path d="M2.5 13C2.5 8 5 6 9.5 6C13 6 13.5 5.5 15 3.5Q16.5 2 19 2H27Q29.5 2 31 3.5C32.5 5.5 33 6 36.5 6C41 6 43.5 8 43.5 13V31C43.5 36 41 38 36.5 38H9.5C5 38 2.5 36 2.5 31Z" />
        <circle cx="23" cy="21" r="9" />
      </svg>
      <svg className="ml-[39px]" width="34" height="48" viewBox="0 0 34 48" fill="none" stroke="currentColor" strokeWidth="3" strokeLinecap="round">
        <rect x="9" y="2.5" width="16" height="30" rx="8" />
        <path d="M2.5 25.5C3 34 9 39.5 17 39.5S31 34 31.5 25.5M17 39.5V46.5" />
      </svg>
    </div>
    <div className="mx-auto h-[10px] w-[296px] rounded-full bg-white" />
  </footer>
)

const App = () => (
  <div className="flex h-[1792px] w-[828px] flex-col overflow-hidden bg-black font-['Inter',sans-serif]">
    <Header />
    <Chat />
    <Composer />
  </div>
)

export default App
